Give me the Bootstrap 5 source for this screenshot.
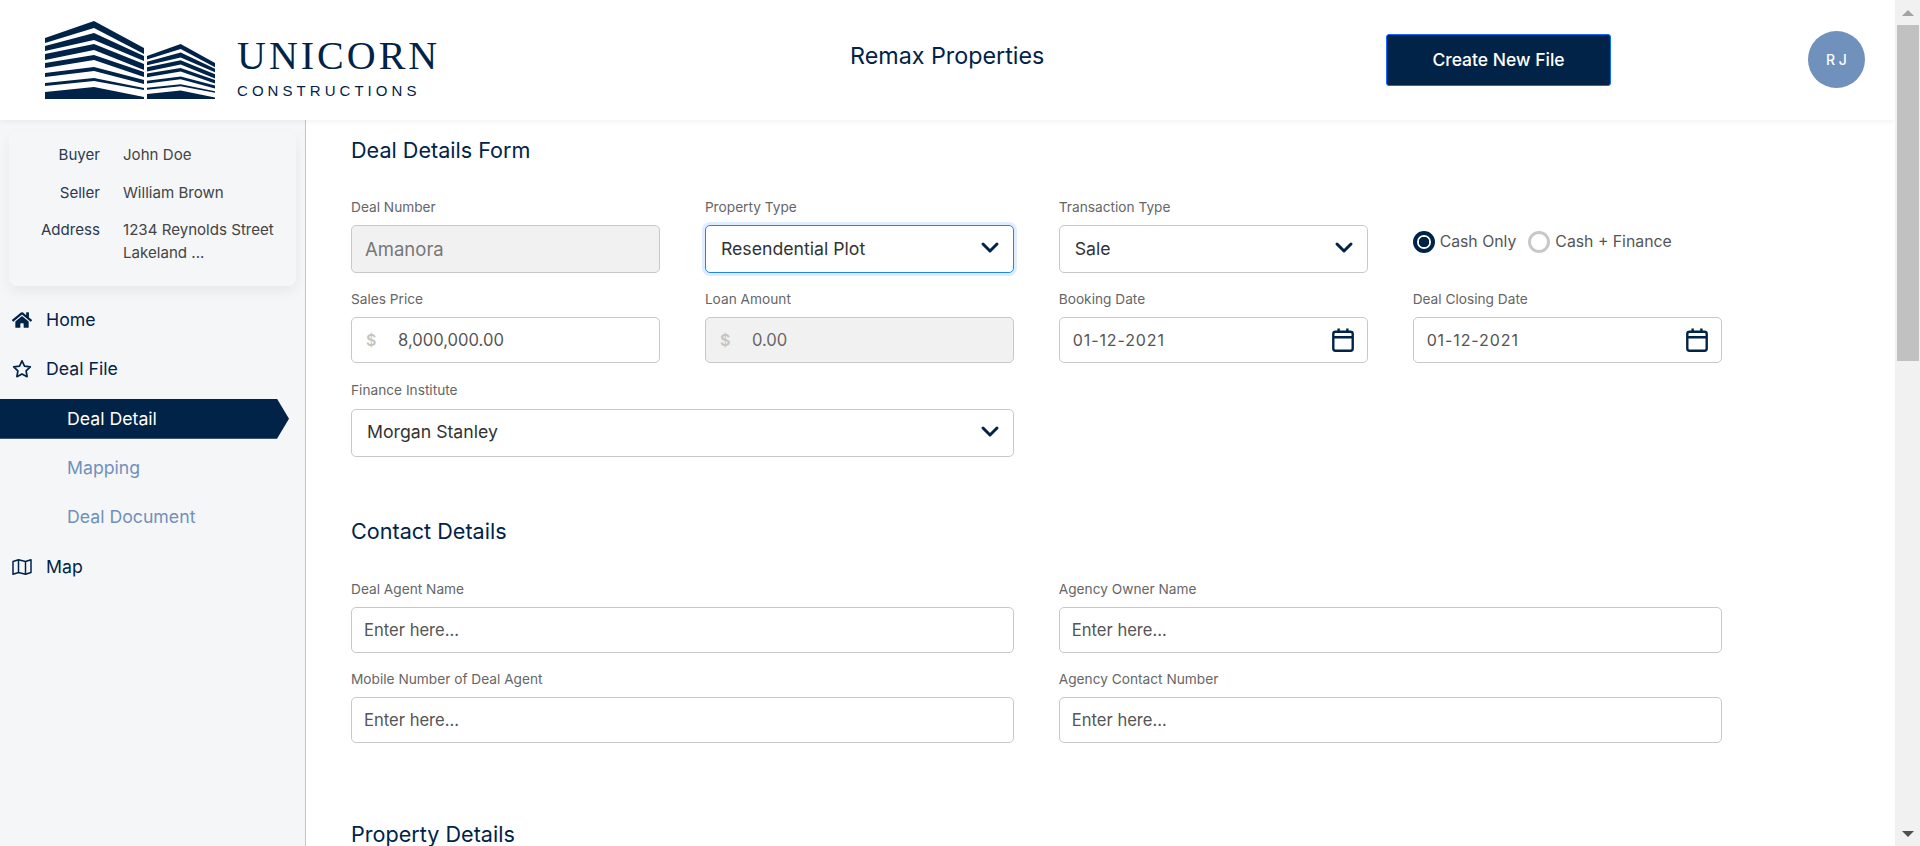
<!DOCTYPE html>
<html lang="en">
<head>
  <meta charset="UTF-8">
  <title>Deal Details Form</title>
  <meta name="viewport" content="width=device-width, initial-scale=1">
  <link href="https://cdn.jsdelivr.net/npm/bootstrap@5.3.3/dist/css/bootstrap.min.css" rel="stylesheet">
  <style>
    html, body { height: 846px; overflow: hidden; }
    body { font-family: Inter, "Noto Sans", sans-serif; color: #012348; background: #fff; }
    .page-area { width: 1895px; height: 846px; overflow: hidden; }

    /* top bar */
    .top-bar { height: 120px; padding-left: 45px; box-shadow: 0 2px 6px rgba(0,0,0,.05); position: relative; z-index: 2; background: #fff; }
    .brand-box { width: 805px; }
    .brand-logo { width: 171px; height: 80px; flex: none; }
    .brand-text { margin: 15px 0 0 21px; }
    .brand-name { font-family: "Liberation Serif", serif; font-size: 40px; line-height: 40px; letter-spacing: 3px; color: #012348; }
    .brand-sub { font-family: "Liberation Sans", sans-serif; font-size: 15px; line-height: 18px; letter-spacing: 4.05px; color: #012348; margin-top: 6px; }
    .client-name { width: 536px; font-size: 23.3px; margin-bottom: 8px; color: #012348; }
    .btn-create { width: 225px; height: 52px; background: #012348; border: 1px solid #0d6efd; border-radius: 3px; color: #fff; font-size: 17.5px; font-weight: 500; }
    .avatar-dot { width: 57px; height: 57px; margin-left: 197px; border-radius: 50%; background: #7091bb; color: #fff; font-size: 14px; font-weight: 500; margin-bottom: 2px; }

    /* sidebar */
    .side-bar { width: 306px; flex: none; height: 726px; background: #f5f6f8; border-right: 1px solid #c6c6c6; }
    .info-box { width: 287px; margin: 12px 0 0 9px; padding: 11px 0 22px; background: #f5f6f8; border-radius: 8px; box-shadow: 0 6px 14px rgba(0,0,0,.06); font-size: 15.1px; line-height: 23px; }
    .info-row { margin-bottom: 14.5px; }
    .info-row:last-child { margin-bottom: 0; }
    .info-label { width: 91px; flex: none; text-align: right; margin-right: 23px; color: #2a3a50; white-space: nowrap; }
    .info-value { color: #444; white-space: nowrap; }
    .side-menu { margin-top: 14px; gap: 9.4px; font-size: 17.7px; }
    .side-link { height: 40px; display: flex; align-items: center; color: #012348; text-decoration: none; }
    .side-icon { width: 20px; height: 20px; margin: 0 14px 0 12px; flex: none; }
    .side-sub { padding-left: 67px; color: #7091bb; }
    .side-sub.is-active { width: 289px; background: #012348; color: #fff; clip-path: polygon(0 0, 277px 0, 100% 50%, 277px 100%, 0 100%); }

    /* form */
    .form-area { flex-grow: 1; padding: 15px 173.5px 0 45px; height: 726px; overflow: hidden; }
    .form-heading { font-size: 21.6px; line-height: 30px; font-weight: 400; margin: 0 0 32px; color: #012348; }
    .form-heading.next-part { margin-top: 59.5px; margin-bottom: 33px; }
    .form-heading.last-part { margin-top: 75.5px; }
    .form-row { --bs-gutter-x: 45px; --bs-gutter-y: 0; }
    .field-wrap { margin-bottom: 16px; }
    .field-wrap.row-end { margin-bottom: 17px; }
    .field-label { display: block; font-size: 13.7px; line-height: 20px; color: #666; margin-bottom: 8px; }
    .field-label.far-label { margin-bottom: 8.5px; }
    .tall-select, .plain-input, .box-input { border: 1px solid #c8c8c8; border-radius: 5px; box-shadow: none; }
    .tall-select { height: 48px; padding: 0 40px 0 15px; font-size: 17.7px; color: #333; background-size: 20px 20px; background-position: right 13px top 12px;
      background-image: url("data:image/svg+xml,%3csvg xmlns='http://www.w3.org/2000/svg' viewBox='0 0 20 20'%3e%3cpath fill='none' stroke='%23012348' stroke-width='3' stroke-linecap='round' stroke-linejoin='round' d='M3 6l7 7 7-7'/%3e%3c/svg%3e"); }
    .tall-select.has-focus { border-color: #1d86f5; box-shadow: 0 0 0 3px rgba(13,110,253,.13); }
    .plain-input { height: 46px; padding: 0 12px; font-size: 16.6px; color: #444; }
    .plain-input::placeholder { color: #555; opacity: 1; }
    .plain-input.is-locked { height: 48px; padding: 0 13px; font-size: 18.5px; background: #f1f1f1; color: #777; }
    .box-input { height: 46px; background: #fff; }
    .box-input.is-locked { background: #f1f1f1; }
    .box-input input { border: 0; outline: 0; background: transparent; font-size: 16.6px; color: #555; min-width: 0; width: 100%; padding: 0; }
    .box-input.is-locked input { color: #666; }
    .money-sign { width: 46px; flex: none; padding-left: 14px; color: #c4c4c4; font-weight: 600; }
    .box-input input.date-text { padding-left: 13px; font-size: 16px; letter-spacing: .9px; }
    .cal-icon { width: 22px; height: 24px; flex: none; margin-right: 13px; }
    .radio-line { height: 48px; padding-bottom: 14px; gap: 5px; font-size: 15.8px; color: #555; white-space: nowrap; }
    .radio-dot { width: 22px; height: 22px; border-radius: 50%; border: 3px solid #c8c8c8; background: #fff; flex: none; }
    .radio-dot.is-on { border: 4px solid #012348; background: radial-gradient(circle, #012348 0 5px, #fff 5.5px); }
    .radio-gap { margin-left: 7px; }

    /* window scrollbar in the picture */
    .scroll-rail { width: 25px; height: 846px; flex: none; background: #f1f1f1; }
    .scroll-thumb { height: 336px; margin: 0 1px 0 2px; background: #c1c1c1; }
    .scroll-up, .scroll-down { height: 25px; }
    .scroll-up::after, .scroll-down::after { content: ""; border-left: 6px solid transparent; border-right: 6px solid transparent; }
    .scroll-up::after { border-bottom: 6px solid #a3a3a3; }
    .scroll-down::after { border-top: 6px solid #505050; }
  </style>
</head>
<body>
<svg width="0" height="0" class="position-absolute">
  <defs>
    <g id="tower">
      <path d="M45 37 94 20 144 47V53L94 27 45 42Z"/>
      <path d="M45 45 94 32 144 55V60L94 39 45 50Z"/>
      <path d="M45 53 94 43 144 63V69L94 49 45 59Z"/>
      <path d="M45 62 94 54 144 71V76L94 59 45 67Z"/>
      <path d="M45 72 94 66 144 79V83L94 70 45 76Z"/>
      <path d="M45 82 94 77 144 87V89L94 80 45 85Z"/>
      <path d="M45 91 94 86 144 96V98H45Z"/>
    </g>
  </defs>
</svg>

<div class="d-flex">
  <div class="page-area">
    <!-- Top bar -->
    <header class="top-bar d-flex align-items-center">
      <div class="brand-box d-flex align-items-center">
        <svg class="brand-logo" viewBox="45 19 171 80" fill="#012348">
          <use href="#tower"/>
          <use href="#tower" transform="translate(147 98) scale(.687 .705) translate(-45 -98)"/>
        </svg>
        <div class="brand-text">
          <div class="brand-name">UNICORN</div>
          <div class="brand-sub">CONSTRUCTIONS</div>
        </div>
      </div>
      <div class="client-name">Remax Properties</div>
      <button class="btn btn-create p-0" type="button">Create New File</button>
      <div class="avatar-dot d-flex align-items-center justify-content-center">R J</div>
    </header>

    <div class="d-flex">
      <!-- Sidebar -->
      <aside class="side-bar">
        <div class="info-box">
          <div class="info-row d-flex"><div class="info-label">Buyer</div><div class="info-value">John Doe</div></div>
          <div class="info-row d-flex"><div class="info-label">Seller</div><div class="info-value">William Brown</div></div>
          <div class="info-row d-flex"><div class="info-label">Address</div><div class="info-value">1234 Reynolds Street<br>Lakeland ...</div></div>
        </div>
        <nav class="side-menu d-flex flex-column">
          <a class="side-link" href="#">
            <svg class="side-icon" viewBox="0 0 576 512" fill="#012348"><path d="M280.37 148.26L96 300.11V464a16 16 0 0 0 16 16l112.06-.29a16 16 0 0 0 15.92-16V368a16 16 0 0 1 16-16h64a16 16 0 0 1 16 16v95.64a16 16 0 0 0 16 16.05L464 480a16 16 0 0 0 16-16V300L295.67 148.26a12.19 12.19 0 0 0-15.3 0zM571.6 251.47L488 182.56V44.05a12 12 0 0 0-12-12h-56a12 12 0 0 0-12 12v72.61L318.47 43a48 48 0 0 0-61 0L4.34 251.47a12 12 0 0 0-1.6 16.9l25.5 31A12 12 0 0 0 45.15 301l235.22-193.74a12.19 12.19 0 0 1 15.3 0L530.9 301a12 12 0 0 0 16.9-1.6l25.5-31a12 12 0 0 0-1.7-16.93z"/></svg>
            Home
          </a>
          <a class="side-link" href="#">
            <svg class="side-icon" viewBox="0 0 20 20" fill="none" stroke="#012348" stroke-width="1.7" stroke-linejoin="round"><path d="M10 1.8l2.5 5.3 5.8.8-4.2 4 1 5.8-5.1-2.8-5.1 2.8 1-5.8-4.2-4 5.8-.8z"/></svg>
            Deal File
          </a>
          <a class="side-link side-sub is-active" href="#">Deal Detail</a>
          <a class="side-link side-sub" href="#">Mapping</a>
          <a class="side-link side-sub" href="#">Deal Document</a>
          <a class="side-link" href="#">
            <svg class="side-icon" viewBox="0 0 20 20" fill="none" stroke="#012348" stroke-width="1.5" stroke-linejoin="round"><path d="M1 4.5l5.5-1.8 7 1.8L19 2.7v12.8l-5.5 1.8-7-1.8L1 17.3zM6.5 2.7v12.8M13.5 4.5v12.8"/></svg>
            Map
          </a>
        </nav>
      </aside>

      <!-- Form -->
      <main class="form-area">
        <h5 class="form-heading">Deal Details Form</h5>
        <div class="row form-row">
          <div class="col-3 field-wrap">
            <label class="field-label">Deal Number</label>
            <input class="form-control plain-input is-locked" type="text" value="Amanora" disabled>
          </div>
          <div class="col-3 field-wrap">
            <label class="field-label">Property Type</label>
            <select class="form-select tall-select has-focus"><option>Resendential Plot</option></select>
          </div>
          <div class="col-3 field-wrap">
            <label class="field-label">Transaction Type</label>
            <select class="form-select tall-select"><option>Sale</option></select>
          </div>
          <div class="col-3 field-wrap d-flex flex-column justify-content-end">
            <div class="radio-line d-flex align-items-center">
              <span class="radio-dot is-on"></span><span>Cash Only</span>
              <span class="radio-dot radio-gap"></span><span>Cash + Finance</span>
            </div>
          </div>

          <div class="col-3 field-wrap row-end">
            <label class="field-label">Sales Price</label>
            <div class="box-input d-flex align-items-center"><span class="money-sign">$</span><input type="text" value="8,000,000.00"></div>
          </div>
          <div class="col-3 field-wrap row-end">
            <label class="field-label">Loan Amount</label>
            <div class="box-input is-locked d-flex align-items-center"><span class="money-sign">$</span><input type="text" value="0.00" disabled></div>
          </div>
          <div class="col-3 field-wrap row-end">
            <label class="field-label">Booking Date</label>
            <div class="box-input d-flex align-items-center">
              <input class="date-text" type="text" value="01-12-2021">
              <svg class="cal-icon" viewBox="2 1 20 22" fill="none" stroke="#012348" stroke-width="2.2"><rect x="3.1" y="4.5" width="17.8" height="17.4" rx="2"/><path d="M3 9.5h18M8 1.5v4M16 1.5v4"/></svg>
            </div>
          </div>
          <div class="col-3 field-wrap row-end">
            <label class="field-label">Deal Closing Date</label>
            <div class="box-input d-flex align-items-center">
              <input class="date-text" type="text" value="01-12-2021">
              <svg class="cal-icon" viewBox="2 1 20 22" fill="none" stroke="#012348" stroke-width="2.2"><rect x="3.1" y="4.5" width="17.8" height="17.4" rx="2"/><path d="M3 9.5h18M8 1.5v4M16 1.5v4"/></svg>
            </div>
          </div>

          <div class="col-6 field-wrap mb-0">
            <label class="field-label far-label">Finance Institute</label>
            <select class="form-select tall-select"><option>Morgan Stanley</option></select>
          </div>
        </div>

        <h5 class="form-heading next-part">Contact Details</h5>
        <div class="row form-row">
          <div class="col-6 field-wrap">
            <label class="field-label">Deal Agent Name</label>
            <input class="form-control plain-input" type="text" placeholder="Enter here...">
          </div>
          <div class="col-6 field-wrap">
            <label class="field-label">Agency Owner Name</label>
            <input class="form-control plain-input" type="text" placeholder="Enter here...">
          </div>
          <div class="col-6 field-wrap mb-0">
            <label class="field-label">Mobile Number of Deal Agent</label>
            <input class="form-control plain-input" type="text" placeholder="Enter here...">
          </div>
          <div class="col-6 field-wrap mb-0">
            <label class="field-label">Agency Contact Number</label>
            <input class="form-control plain-input" type="text" placeholder="Enter here...">
          </div>
        </div>

        <h5 class="form-heading last-part">Property Details</h5>
      </main>
    </div>
  </div>

  <!-- Scrollbar -->
  <div class="scroll-rail d-flex flex-column">
    <div class="scroll-up d-flex align-items-center justify-content-center"></div>
    <div class="scroll-thumb"></div>
    <div class="flex-grow-1"></div>
    <div class="scroll-down d-flex align-items-center justify-content-center"></div>
  </div>
</div>
<script src="https://cdn.jsdelivr.net/npm/bootstrap@5.3.3/dist/js/bootstrap.bundle.min.js"></script>
</body>
</html>
